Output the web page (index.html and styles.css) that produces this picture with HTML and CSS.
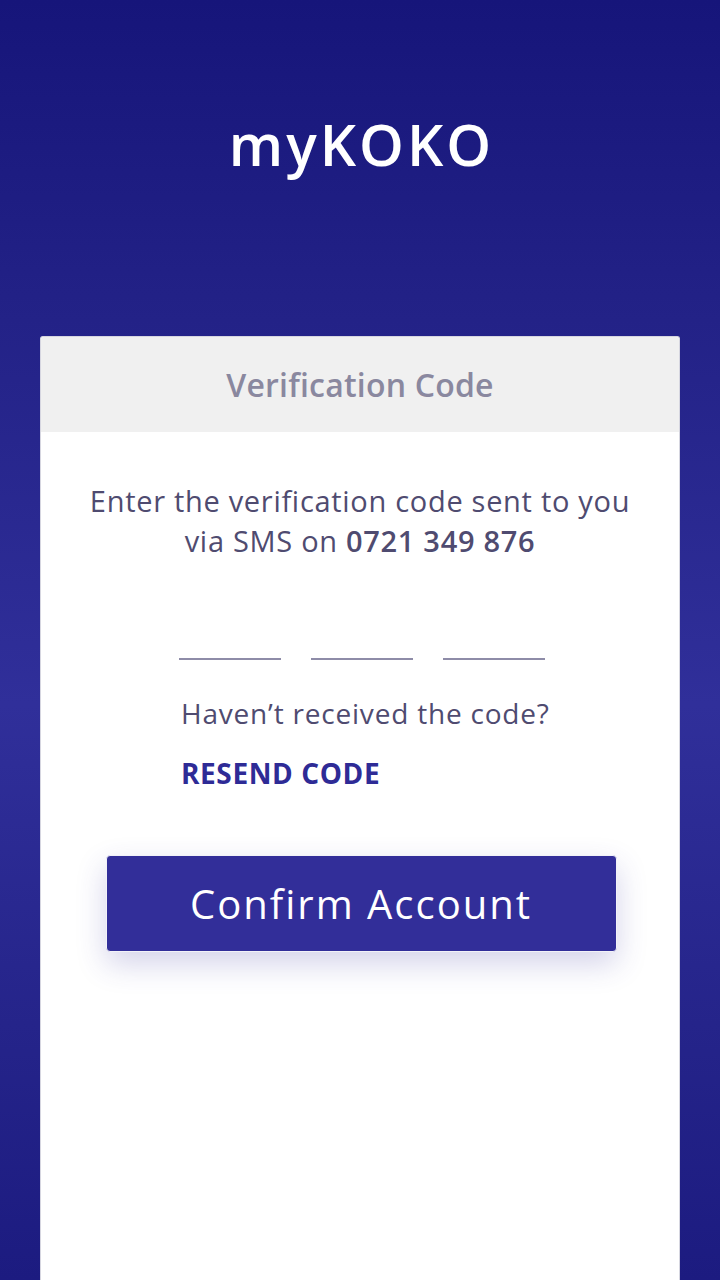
FILE: index.html
```
<!DOCTYPE html>
<html lang="en">
<head>
<meta charset="utf-8">
<title>myKOKO - Verification Code</title>
<link rel="stylesheet" href="styles.css">
</head>
<body>
<div class="screen">
  <header class="brand">myKOKO</header>
  <main class="card">
    <div class="card-head">Verification Code</div>
    <div class="card-body">
      <p class="intro">Enter the verification code sent to you via SMS on <strong>0721 349 876</strong></p>
      <div class="code-group">
        <div class="code-inputs">
          <span class="code-slot"></span>
          <span class="code-slot"></span>
          <span class="code-slot"></span>
        </div>
        <p class="hint">Haven’t received the code?</p>
        <a class="resend">RESEND CODE</a>
      </div>
      <button class="confirm">Confirm Account</button>
    </div>
  </main>
</div>
</body>
</html>
```
FILE: styles.css
```
html, body {
  margin: 0;
  padding: 0;
}
body {
  width: 720px;
  height: 1280px;
  overflow: hidden;
  font-family: "Open Sans", "Noto Sans", sans-serif;
  background: linear-gradient(180deg, #16157a 0%, #232287 25%, #302f9a 55%, #25248a 80%, #1c1b80 100%);
}
.screen {
  display: flex;
  flex-direction: column;
  align-items: center;
  height: 1280px;
}
.brand {
  margin-top: 101px;
  height: 86px;
  line-height: 86px;
  font-size: 57px;
  font-weight: 600;
  color: #ffffff;
  letter-spacing: 3px;
  margin-left: 3px;
}
.card {
  margin-top: 149px;
  width: 638px;
  flex: 1;
  background: #ffffff;
  border: 1px solid #d6d6e0;
  border-bottom: none;
  border-radius: 3px 3px 0 0;
  display: flex;
  flex-direction: column;
}
.card-head {
  height: 95px;
  background: #f0f0f0;
  border-radius: 3px 3px 0 0;
  display: flex;
  align-items: center;
  justify-content: center;
  font-size: 32px;
  font-weight: 600;
  color: #8a889f;
  letter-spacing: 0.2px;
}
.card-body {
  display: flex;
  flex-direction: column;
  align-items: center;
  padding-top: 49px;
}
.intro {
  margin: 0;
  width: 556px;
  text-align: center;
  font-size: 29px;
  line-height: 40px;
  color: #4f4b70;
  letter-spacing: 0.7px;
}
.intro strong {
  font-weight: 600;
}
.code-group {
  width: 366px;
  margin-top: 97px;
  display: flex;
  flex-direction: column;
  margin-left: 4px;
}
.code-inputs {
  display: flex;
  gap: 30px;
}
.code-slot {
  width: 102px;
  height: 2px;
  background: #8e8ca8;
}
.hint {
  margin: 35px 0 0 2px;
  font-size: 28px;
  line-height: 36px;
  color: #4f4b70;
  letter-spacing: 0.8px;
  white-space: nowrap;
}
.resend {
  margin: 24px 0 0 2px;
  font-size: 28px;
  line-height: 36px;
  font-weight: 700;
  color: #2e2b96;
  letter-spacing: 0.6px;
}
.confirm {
  margin-top: 64px;
  width: 511px;
  height: 97px;
  border: 1px solid #f2f2f8;
  border-radius: 4px;
  background: #322e99;
  color: #ffffff;
  font-family: "Open Sans", "Noto Sans", sans-serif;
  font-size: 40px;
  font-weight: 400;
  letter-spacing: 2px;
  box-shadow: 0 12px 30px rgba(60, 56, 160, 0.22);
  margin-left: 2px;
  padding: 0;
}
```
